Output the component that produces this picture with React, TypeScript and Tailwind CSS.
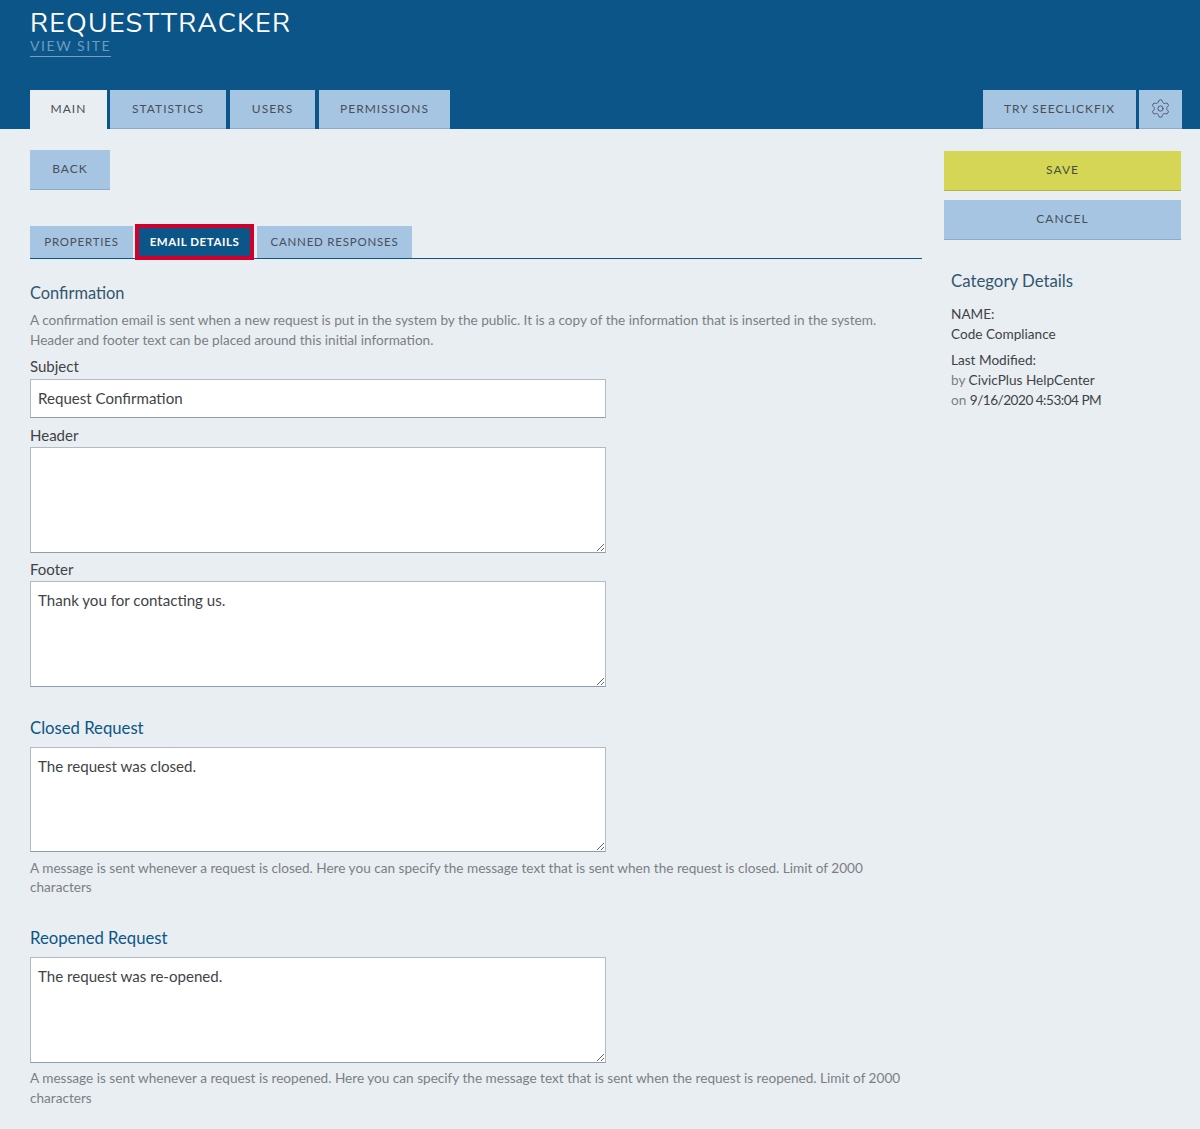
import { Settings } from "lucide-react";

const navTabs = [
  { label: "MAIN", width: "w-[77px]", active: true },
  { label: "STATISTICS", width: "w-[116px] ml-[3px]" },
  { label: "USERS", width: "w-[85px] ml-[4px]" },
  { label: "PERMISSIONS", width: "w-[131px] ml-[4px]" },
];

const btn =
  "flex items-center justify-center border-b border-[#8fa9c9] bg-[#a6c5e3] pb-px text-[12px] tracking-[1px] text-[#4a4f57]";

function Field({ height, value }: { height: string; value?: string }) {
  return (
    <textarea
      defaultValue={value}
      className={`block w-[576px] ${height} border border-[#b0bbc7] border-b-[#8f9cab] bg-white px-[7px] py-[8px] text-[15.1px] leading-[20px] text-[#3f4347] outline-none`}
    />
  );
}

export default function App() {
  return (
    <div className="min-h-[1129px] bg-[#e9eef2] font-['Lato',sans-serif]">
      {/* Header */}
      <header className="flex h-[129px] flex-col bg-[#0b5588] px-[18px] pl-[30px]">
        <h1 className="pt-[9px] font-['Nunito','Open_Sans',sans-serif] text-[27px] leading-[29px] tracking-[1.2px] text-white">
          REQUESTTRACKER
        </h1>
        <a className="w-fit border-b border-[#7a9fbd] pb-[2px] text-[14px] leading-[16px] tracking-[1.55px] text-[#6f9bbd]">
          VIEW SITE
        </a>
        <nav className="mt-auto flex h-[39px] items-stretch">
          <div className="flex">
            {navTabs.map((t) => (
              <div
                key={t.label}
                className={
                  t.active
                    ? `flex ${t.width} items-center justify-center bg-[#e9eef2] pb-px text-[12px] tracking-[1px] text-[#4a4f57]`
                    : `${btn} ${t.width}`
                }
              >
                {t.label}
              </div>
            ))}
          </div>
          <div className="ml-auto flex gap-[3px]">
            <div className={`${btn} w-[153px]`}>TRY SEECLICKFIX</div>
            <div className={`${btn} w-[43px]`}>
              <Settings size={21} strokeWidth={1.1} className="text-[#4a5568]" />
            </div>
          </div>
        </nav>
      </header>

      <div className="flex items-start pl-[30px]">
        {/* Left column */}
        <main className="w-[892px]">
          <div className={`${btn} mt-[21px] h-[40px] w-[80px]`}>BACK</div>

          <div className="mt-[36px] flex h-[33px] items-stretch gap-[2px] border-b border-[#0b5588]">
            <div className="flex w-[103px] items-center justify-center bg-[#a6c5e3] text-[11.5px] tracking-[0.78px] text-[#4a4f57]">
              PROPERTIES
            </div>
            <div className="relative z-10 -mt-[2px] -mb-[2px] flex w-[119px] items-center justify-center border-[4px] border-[#d0002c] bg-[#0b5588] text-[11.5px] font-bold tracking-[0.55px] text-white">
              EMAIL DETAILS
            </div>
            <div className="ml-px flex w-[155px] items-center justify-center bg-[#a6c5e3] text-[11.5px] tracking-[0.78px] text-[#4a4f57]">
              CANNED RESPONSES
            </div>
          </div>

          <h2 className="mt-[24px] text-[16.4px] leading-[20px] text-[#33566f]">Confirmation</h2>
          <p className="mt-[7px] text-[13.6px] leading-[20px] text-[#7b7f84]">
            A confirmation email is sent when a new request is put in the system by the public. It is a copy of the
            information that is inserted in the system.
            <br />
            Header and footer text can be placed around this initial information.
          </p>

          <label className="mt-[6px] block text-[15px] leading-[20px] text-[#3f4347]">Subject</label>
          <input
            defaultValue="Request Confirmation"
            className="mt-[3px] block h-[39px] w-[576px] border border-[#b0bbc7] border-b-[#8f9cab] bg-white px-[7px] pb-[2px] text-[15.1px] text-[#3f4347] outline-none"
          />

          <label className="mt-[7px] block text-[15px] leading-[20px] text-[#3f4347]">Header</label>
          <div className="mt-[2px]">
            <Field height="h-[106px]" />
          </div>

          <label className="mt-[6px] block text-[15px] leading-[21px] text-[#3f4347]">Footer</label>
          <div className="mt-px">
            <Field height="h-[106px]" value="Thank you for contacting us." />
          </div>

          <h2 className="mt-[31px] text-[16.7px] leading-[20px] text-[#0b5588]">Closed Request</h2>
          <div className="mt-[9px]">
            <Field height="h-[105px]" value="The request was closed." />
          </div>
          <p className="mt-[7px] text-[13.6px] leading-[19px] text-[#7b7f84]">
            A message is sent whenever a request is closed. Here you can specify the message text that is sent when the
            request is closed. Limit of 2000 characters
          </p>

          <h2 className="mt-[31px] text-[16.7px] leading-[20px] text-[#0b5588]">Reopened Request</h2>
          <div className="mt-[9px]">
            <Field height="h-[106px]" value="The request was re-opened." />
          </div>
          <p className="mt-[5px] text-[13.6px] leading-[20px] text-[#7b7f84]">
            A message is sent whenever a request is reopened. Here you can specify the message text that is sent when
            the request is reopened. Limit of 2000 characters
          </p>
        </main>

        {/* Right column */}
        <aside className="ml-[22px] w-[237px] pt-[22px]">
          <div className="flex h-[40px] items-center justify-center border-b border-[#b5b53c] bg-[#d5d655] pb-px text-[12px] tracking-[1px] text-[#4a4f3a]">
            SAVE
          </div>
          <div className={`${btn} mt-[9px] h-[40px]`}>CANCEL</div>
          <div className="px-[7px]">
            <h3 className="mt-[31px] text-[16.8px] leading-[20px] text-[#33566f]">Category Details</h3>
            <p className="mt-[13px] text-[13.6px] leading-[20px] text-[#3f4347]">NAME:</p>
            <p className="text-[13.6px] leading-[20px] text-[#3f4347]">Code Compliance</p>
            <p className="mt-[6px] text-[13.6px] leading-[20px] text-[#3f4347]">Last Modified:</p>
            <p className="text-[13.6px] leading-[20px] text-[#3f4347]">
              <span className="text-[#7b7f84]">by</span> CivicPlus HelpCenter
            </p>
            <p className="text-[13.6px] leading-[20px] text-[#3f4347]">
              <span className="text-[#7b7f84]">on</span> <span className="tracking-[-0.5px]">9/16/2020 4:53:04 PM</span>
            </p>
          </div>
        </aside>
      </div>
    </div>
  );
}
